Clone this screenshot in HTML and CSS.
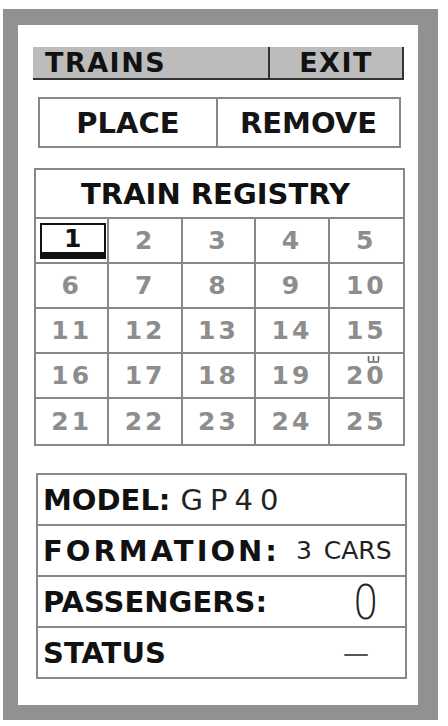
FILE: index.html
```html
<!DOCTYPE html>
<html lang="en">
<head>
  <meta charset="UTF-8">
  <meta name="viewport" content="width=device-width, initial-scale=1.0">
  <title>Trains</title>
  <link rel="stylesheet" href="styles.css">
</head>
<body>
  <div class="frame">
    <!-- Barra de menú -->
    <div class="menubar">
      <span class="menu-item menu-trains">TRAINS</span>
      <span class="menu-item menu-exit">EXIT</span>
    </div>

    <!-- Acciones -->
    <div class="actions">
      <button class="action">PLACE</button>
      <button class="action">REMOVE</button>
    </div>

    <!-- Registro de trenes -->
    <div class="registry">
      <div class="registry-title">TRAIN REGISTRY</div>
      <div class="registry-grid">
        <div class="slot"><span class="slot-current">1</span></div>
        <div class="slot">2</div>
        <div class="slot">3</div>
        <div class="slot">4</div>
        <div class="slot">5</div>
        <div class="slot">6</div>
        <div class="slot">7</div>
        <div class="slot">8</div>
        <div class="slot">9</div>
        <div class="slot">10</div>
        <div class="slot">11</div>
        <div class="slot">12</div>
        <div class="slot">13</div>
        <div class="slot">14</div>
        <div class="slot">15</div>
        <div class="slot">16</div>
        <div class="slot">17</div>
        <div class="slot">18</div>
        <div class="slot">19</div>
        <div class="slot slot-marked">20
          <svg class="marker" width="13" height="7" viewBox="0 0 13 7">
            <path d="M1.5 0v5M6.5 0v5M11.5 0v5M1 6h11" stroke="#666" stroke-width="1.6" fill="none"/>
          </svg>
        </div>
        <div class="slot">21</div>
        <div class="slot">22</div>
        <div class="slot">23</div>
        <div class="slot">24</div>
        <div class="slot">25</div>
      </div>
    </div>

    <!-- Datos del tren seleccionado -->
    <div class="info">
      <div class="info-row">
        <span class="label">MODEL:</span><span class="value value-model">GP40</span>
      </div>
      <div class="info-row">
        <span class="label label-wide">FORMATION:</span><span class="value value-cars">3 CARS</span>
      </div>
      <div class="info-row">
        <span class="label">PASSENGERS:</span><span class="value value-count">0</span>
      </div>
      <div class="info-row">
        <span class="label">STATUS</span><span class="value value-status">—</span>
      </div>
    </div>
  </div>
</body>
</html>
```

FILE: styles.css
```css
/* Estilos generales */
body {
  margin: 0;
  background-color: #fff;
  font-family: 'DejaVu Sans', 'Verdana', sans-serif;
  color: #111;
}

/* Marco principal */
.frame {
  box-sizing: border-box;
  width: 435px;
  height: 711px;
  margin: 9px 0 0 3px;
  border-style: solid;
  border-color: #919191;
  border-width: 16px 20px 15px 15px;
  background-color: #fff;
  padding: 22px 14px 0 15px;
  display: flex;
  flex-direction: column;
}

/* Barra de menú */
.menubar {
  display: flex;
  height: 33px;
  background-color: #bcbcbc;
  border-bottom: 2px solid #333;
  border-right: 2px solid #333;
  box-sizing: border-box;
}

.menu-item {
  display: flex;
  align-items: center;
  font-weight: bold;
  font-size: 27px;
  letter-spacing: 1.5px;
  line-height: 1;
}

.menu-trains {
  width: 237px;
  padding-left: 12px;
  box-sizing: border-box;
  border-right: 2px solid #333;
}

.menu-exit {
  flex: 1;
  justify-content: center;
}

/* Botones de acción */
.actions {
  display: flex;
  height: 51px;
  margin: 17px 3px 0 5px;
  border: 2px solid #888;
  box-sizing: border-box;
}

.action {
  flex: 1;
  background: #fff;
  border: none;
  padding: 0;
  font-family: inherit;
  font-weight: bold;
  font-size: 29px;
  color: #151515;
}

.action + .action {
  flex: 0 0 183px;
  border-left: 2px solid #888;
}

/* Registro */
.registry {
  margin: 20px -1px 0 1px;
  border: 2px solid #888;
}

.registry-title {
  height: 47px;
  display: flex;
  align-items: center;
  justify-content: center;
  font-weight: bold;
  font-size: 29px;
  padding-right: 8px;
  border-bottom: 2px solid #888;
}

.registry-grid {
  display: grid;
  grid-template-columns: repeat(5, 1fr);
  grid-auto-rows: 45px;
}

.slot {
  position: relative;
  display: flex;
  align-items: center;
  justify-content: center;
  font-weight: bold;
  font-size: 25px;
  letter-spacing: 3px;
  color: #8d8d8d;
  border-right: 2px solid #888;
  border-bottom: 2px solid #888;
}

.slot:nth-child(5n) {
  border-right: none;
}

.slot:nth-last-child(-n+5) {
  border-bottom: none;
}

/* Casilla seleccionada */
.slot-current {
  box-sizing: border-box;
  width: 66px;
  height: 36px;
  margin-left: 2px;
  display: flex;
  align-items: center;
  justify-content: center;
  color: #111;
  letter-spacing: 0;
  border: 2px solid #111;
  border-bottom-width: 7px;
}

.marker {
  position: absolute;
  top: 2px;
  right: 23px;
}

/* Datos del tren */
.info {
  margin: 27px -3px 0 3px;
  border: 2px solid #888;
}

.info-row {
  height: 49px;
  display: flex;
  align-items: center;
  padding: 0 0 0 5px;
  border-bottom: 2px solid #888;
}

.info-row:last-child {
  border-bottom: none;
}

.label {
  font-weight: bold;
  font-size: 29px;
}

.label-wide {
  letter-spacing: 3px;
}

.value {
  color: #222;
}

.value-model {
  margin-left: 10px;
  font-size: 29px;
  letter-spacing: 7px;
}

.value-cars {
  margin-left: 16px;
  font-size: 25px;
  word-spacing: 4px;
}

.value-count {
  display: inline-block;
  margin-left: auto;
  margin-right: 28px;
  font-size: 34px;
  font-weight: 200;
  transform: scale(1.2, 1.4);
}

.value-status {
  margin-left: auto;
  margin-right: 36px;
  font-size: 26px;
  color: #555;
}
```
